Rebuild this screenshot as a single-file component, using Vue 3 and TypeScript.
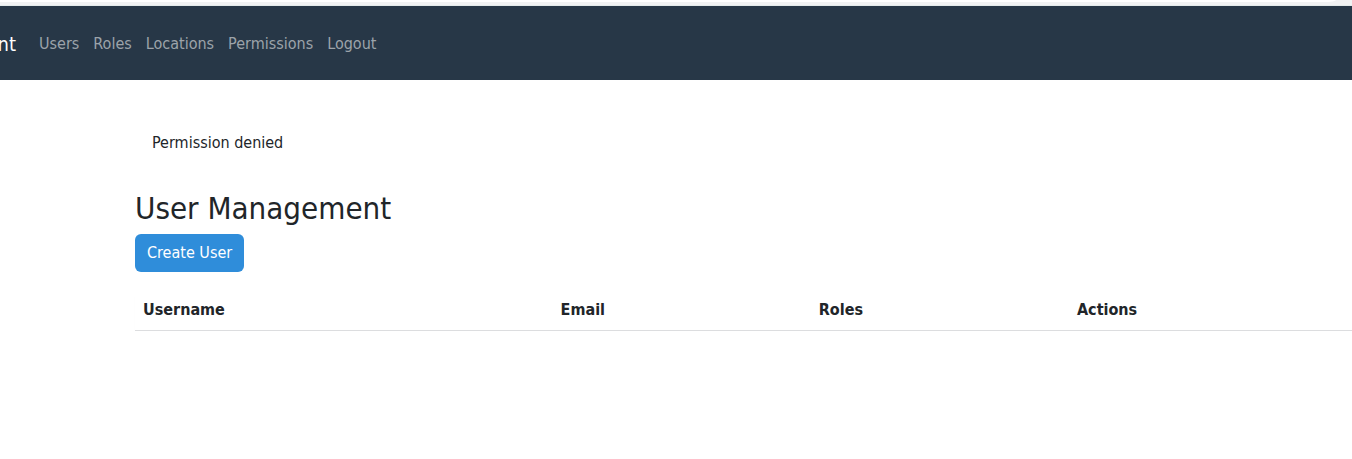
<script setup lang="ts">
interface NavItem {
  label: string
  href: string
}

interface Column {
  label: string
  className: string
}

const navItems: NavItem[] = [
  { label: 'Users', href: '#users' },
  { label: 'Roles', href: '#roles' },
  { label: 'Locations', href: '#locations' },
  { label: 'Permissions', href: '#permissions' },
  { label: 'Logout', href: '#logout' },
]

const columns: Column[] = [
  { label: 'Username', className: 'col-username' },
  { label: 'Email', className: 'col-email' },
  { label: 'Roles', className: 'col-roles' },
  { label: 'Actions', className: 'col-actions' },
]
</script>

<template>
  <div class="page">
    <div class="toolbar"><div class="toolbar-field"></div></div>
    <header class="navbar">
      <a class="brand" href="#home">nt</a>
      <nav class="links">
        <a v-for="item in navItems" :key="item.label" class="link" :href="item.href">{{ item.label }}</a>
      </nav>
    </header>
    <main class="content">
      <div class="alert" role="alert">Permission denied</div>
      <h2 class="title">User Management</h2>
      <button class="create" type="button">Create User</button>
      <table class="table">
        <thead>
          <tr>
            <th v-for="column in columns" :key="column.label" :class="column.className" scope="col">{{ column.label }}</th>
          </tr>
        </thead>
        <tbody></tbody>
      </table>
    </main>
  </div>
</template>

<style>
body {
  margin: 0;
  background: #fff;
}
</style>

<style scoped>
.page {
  font-family: Tahoma, "DejaVu Sans Condensed", "Noto Sans", sans-serif;
  font-size: 16px;
  line-height: 24px;
  color: #212529;
  overflow: hidden;
}

.toolbar {
  height: 5px;
  background: #f1f2f3;
  border-bottom: 1px solid #e4ebeb;
  padding-right: 16px;
}

.toolbar-field {
  height: 2px;
  background: #fff;
  border-bottom-right-radius: 12px 2px;
}

.navbar {
  display: flex;
  align-items: center;
  box-sizing: border-box;
  min-height: 74px;
  padding-top: 2px;
  background: #273747;
}

.brand {
  display: flex;
  justify-content: flex-end;
  width: 16px;
  margin-right: 16px;
  font-size: 20px;
  line-height: 30px;
  color: #fff;
  text-decoration: none;
}

.links {
  display: flex;
}

.link {
  padding: 8px 7px;
  color: #9ca3aa;
  text-decoration: none;
}

.content {
  padding: 35px 0 0 135px;
}

.alert {
  padding: 16px 17px;
  margin-bottom: 18px;
}

.title {
  margin: 0 0 7px;
  font-size: 31px;
  font-weight: 400;
  line-height: 38px;
}

.create {
  display: block;
  padding: 7px 12px;
  border: 0;
  border-radius: 6px;
  background: #2f8dda;
  color: #fff;
  font: inherit;
}

.table {
  width: 100%;
  margin-top: 18px;
  border-collapse: collapse;
  table-layout: fixed;
  box-shadow: 0 4px 3px -2px #e8e8e8;
}

.table th {
  padding: 8px;
  border-bottom: 1px solid #dcdddf;
  text-align: left;
  font-weight: 700;
}

.col-username {
  width: 33%;
}

.col-email {
  width: 19.9%;
}

.col-roles {
  width: 19.9%;
}
</style>
